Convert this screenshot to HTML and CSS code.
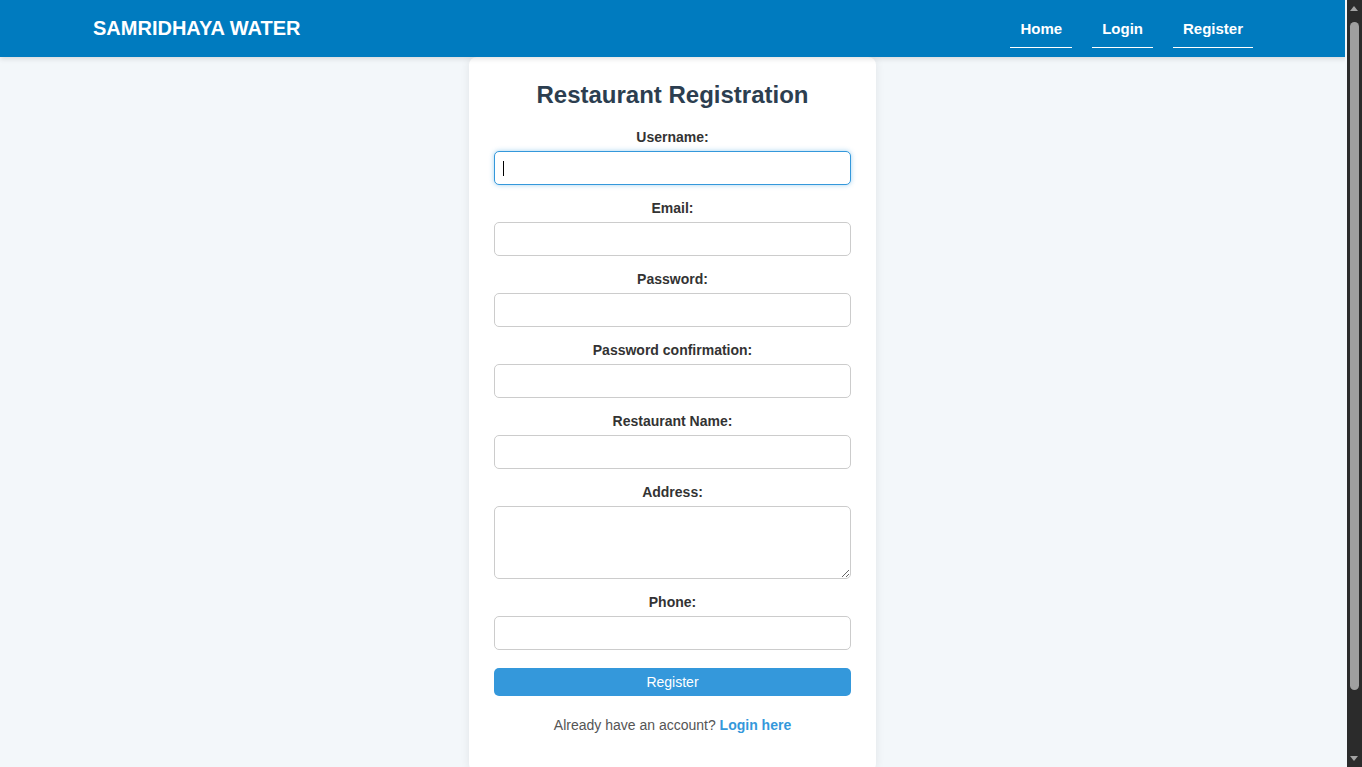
FILE: index.html
```html
<!DOCTYPE html>
<html lang="en">
<head>
<meta charset="utf-8">
<title>Restaurant Registration - Samridhaya Water</title>
<link rel="stylesheet" href="styles.css">
</head>
<body>
<header class="site-header">
  <div class="header-inner">
    <a class="logo" href="#">SAMRIDHAYA WATER</a>
    <nav class="nav">
      <a href="#" class="nav-link">Home</a>
      <a href="#" class="nav-link">Login</a>
      <a href="#" class="nav-link">Register</a>
    </nav>
  </div>
</header>
<main class="main">
  <div class="card">
    <h2 class="title">Restaurant Registration</h2>
    <form class="form">
      <label class="label" for="username">Username:</label>
      <div class="field-wrap">
        <input class="field focused" id="username" type="text">
        <span class="caret" aria-hidden="true"></span>
      </div>
      <label class="label" for="email">Email:</label>
      <input class="field" id="email" type="email">
      <label class="label" for="password">Password:</label>
      <input class="field" id="password" type="password">
      <label class="label" for="password2">Password confirmation:</label>
      <input class="field" id="password2" type="password">
      <label class="label" for="rname">Restaurant Name:</label>
      <input class="field" id="rname" type="text">
      <label class="label" for="address">Address:</label>
      <textarea class="field area" id="address"></textarea>
      <label class="label" for="phone">Phone:</label>
      <input class="field" id="phone" type="text">
      <button class="btn" type="button">Register</button>
    </form>
    <p class="alt">Already have an account? <a href="#" class="alt-link">Login here</a></p>
  </div>
</main>
<div class="fake-scrollbar" aria-hidden="true">
  <span class="sb-arrow sb-up"></span>
  <span class="sb-thumb"></span>
  <span class="sb-arrow sb-down"></span>
</div>
</body>
</html>
```

FILE: styles.css
```css
* { box-sizing: border-box; }
html, body { margin: 0; padding: 0; }
body {
  font-family: "Liberation Sans", Arial, sans-serif;
  background: #f3f7fa;
  color: #333;
  margin-right: 17px;
}
.site-header {
  background: #007bbf;
  height: 57px;
  box-shadow: 0 2px 5px rgba(0,0,0,0.12);
  position: relative;
  z-index: 2;
  margin-right: -2px;
}
.header-inner {
  max-width: 1161px;
  height: 100%;
  margin: 0 auto;
  padding-right: 1px;
  display: flex;
  align-items: center;
  justify-content: space-between;
}
.logo {
  color: #fff;
  font-weight: bold;
  font-size: 20px;
  text-decoration: none;
}
.nav { display: flex; gap: 20px; padding-top: 1px; }
.nav-link {
  color: #fff;
  font-weight: bold;
  font-size: 15px;
  text-decoration: none;
  padding: 10px 10px 10px;
  line-height: 17px;
  border-bottom: 1px solid #fff;
}
.main {
  padding-bottom: 60px;
}
.card {
  width: 407px;
  margin: 0 auto;
  background: #fff;
  border-radius: 8px;
  box-shadow: 0 0 10px rgba(0,0,0,0.08);
  padding: 24px 25px 25px;
  position: relative;
  z-index: 1;
}
.title {
  margin: 0 0 20px;
  text-align: center;
  font-size: 24px;
  color: #2c3e50;
  line-height: 28px;
}
.form { display: flex; flex-direction: column; }
.label {
  display: block;
  text-align: center;
  font-weight: bold;
  font-size: 14px;
  line-height: 16px;
  margin-bottom: 6px;
  color: #333;
}
.field-wrap { position: relative; }
.caret {
  position: absolute;
  left: 9px;
  top: 10px;
  width: 1px;
  height: 15px;
  background: #000;
}
.field {
  display: block;
  width: 100%;
  height: 34px;
  padding: 8px;
  border: 1px solid #ccc;
  border-radius: 5px;
  font-family: inherit;
  font-size: 14px;
  margin: 0 0 15px;
  background: #fff;
}
.field:focus, .field.focused {
  outline: none;
  border-color: #3498db;
  box-shadow: 0 0 5px rgba(52,152,219,0.45);
}
.area { height: 73px; resize: vertical; }
.btn {
  margin-top: 3px;
  height: 28px;
  width: 100%;
  background: #3498db;
  color: #fff;
  border: none;
  border-radius: 5px;
  font-family: inherit;
  font-size: 14px;
  cursor: pointer;
}
.alt {
  margin: 21px 0 14px;
  text-align: center;
  font-size: 14px;
  line-height: 16px;
  color: #555;
}
.alt-link {
  color: #3498db;
  font-weight: bold;
  text-decoration: none;
}
.fake-scrollbar {
  position: fixed;
  top: 0;
  right: 0;
  width: 15px;
  height: 100vh;
  background: #2b2b2b;
  z-index: 10;
}
.sb-thumb {
  position: absolute;
  left: 3px;
  top: 22px;
  width: 9px;
  height: 668px;
  border-radius: 5px;
  background: #9f9f9f;
}
.sb-arrow {
  position: absolute;
  left: 3px;
  width: 0;
  height: 0;
  border-left: 4.5px solid transparent;
  border-right: 4.5px solid transparent;
}
.sb-up { top: 6px; border-bottom: 5px solid #a3a3a3; }
.sb-down { bottom: 6px; border-top: 5px solid #a3a3a3; }
```
